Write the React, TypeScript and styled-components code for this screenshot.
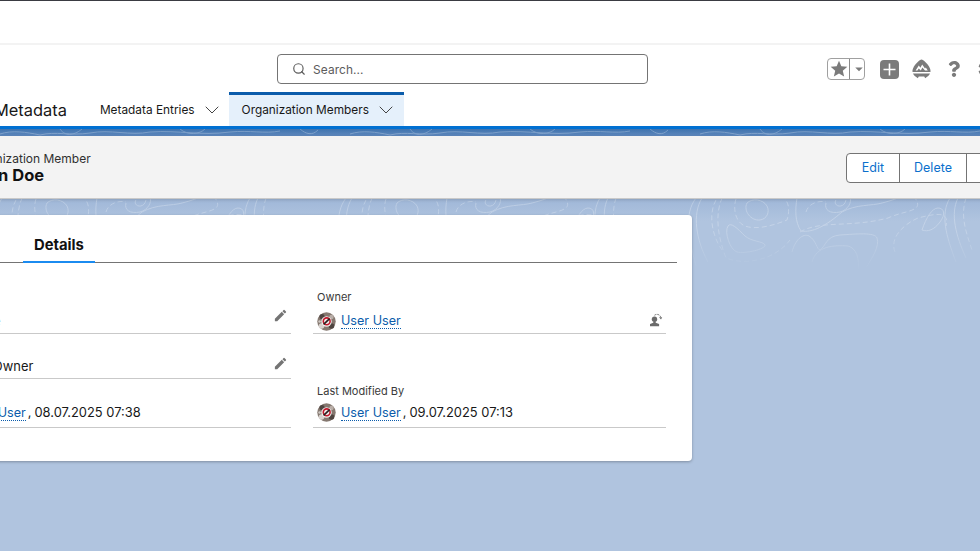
import React from 'react';
import styled, { createGlobalStyle } from 'styled-components';
import { Search as SearchIcon, ChevronDown } from 'lucide-react';
import { MdEdit, MdStar, MdArrowDropDown } from 'react-icons/md';
import { FaCog, FaQuestion } from 'react-icons/fa';

const GlobalStyle = createGlobalStyle`
    html, body {
        margin: 0;
        padding: 0;
        width: 980px;
        height: 551px;
        overflow: hidden;
        background: #b0c4df;
        font-family: Inter, "Liberation Sans", sans-serif;
        color: #181818;
    }
`;

const Shell = styled.div`
    width: 1240px;
    height: 551px;
    margin-left: -100px;
    display: flex;
    flex-direction: column;
`;

const WindowBar = styled.div`
    height: 43px;
    flex: none;
    background: #fff;
    border-top: 1px solid #3a3b42;
    box-sizing: border-box;
`;

const Header = styled.header`
    flex: none;
    background: #fff;
    border-top: 2px solid #f3f3f3;
    position: relative;
    z-index: 2;
`;

const TopRow = styled.div`
    height: 47px;
    display: flex;
    align-items: flex-start;
    padding: 9px 0 0 377px;
    box-sizing: border-box;
`;

const SearchBox = styled.div`
    width: 371px;
    height: 30px;
    box-sizing: border-box;
    border: 1px solid #747474;
    border-radius: 4px;
    display: flex;
    align-items: center;
    gap: 7px;
    padding-left: 14px;
    font-size: 11.9px;
    color: #5c5c5c;
    letter-spacing: 0.1px;
`;

const Actions = styled.div`
    display: flex;
    align-items: center;
    height: 30px;
    margin-left: 179px;
    color: #7b7b7b;
`;

const FavGroup = styled.div`
    width: 38px;
    height: 22px;
    box-sizing: border-box;
    border: 1px solid #a0a0a0;
    border-radius: 4px;
    display: grid;
    grid-template-columns: 21px 1fr;
    align-items: center;
    justify-items: center;
    margin-right: 15px;
`;

const FavCaret = styled.div`
    height: 100%;
    width: 100%;
    border-left: 1px solid #8a8a8a;
    display: flex;
    align-items: center;
    justify-content: center;
`;

const ActionIcon = styled.div<{ $gap: number }>`
    display: flex;
    align-items: center;
    justify-content: center;
    margin-right: ${(p) => p.$gap}px;
`;

const NavRow = styled.nav`
    height: 34px;
    display: flex;
    align-items: stretch;
    padding-left: 94px;
    border-bottom: 3px solid #0070d2;
`;

const AppName = styled.div`
    font-size: 16.4px;
    line-height: 34px;
    margin: 0 21px 0 0;
    padding-top: 1px;
`;

const NavItem = styled.div<{ $active?: boolean }>`
    display: flex;
    align-items: center;
    gap: 5px;
    box-sizing: border-box;
    padding: 0 ${(p) => (p.$active ? '6px' : '5px')} 2px ${(p) => (p.$active ? '13px' : '12px')};
    font-size: 11.85px;
    background: ${(p) => (p.$active ? '#e5f0fb' : 'transparent')};
    border-top: 3px solid ${(p) => (p.$active ? '#0b5cab' : 'transparent')};
    color: #181818;
`;

const Backdrop = styled.main`
    flex: 1;
    position: relative;
    background: linear-gradient(#3f73ae 0, #5e88bd 7px, #9fb7d8 69px, #b0c4df 92px);
    overflow: hidden;
`;

const Contours = styled.svg`
    position: absolute;
    top: 0;
    left: 0;
    width: 1240px;
    height: 141px;
    fill: none;
    stroke: #fff;
    stroke-width: 1;
    opacity: 0.25;
    mask-image: linear-gradient(#000 70%, transparent 100%);
`;

const Content = styled.div`
    position: relative;
`;

const Highlights = styled.section`
    margin: 7px 0 16px;
    height: 63px;
    box-sizing: border-box;
    background: #f3f3f3;
    border-bottom: 1px solid #c9c9c9;
    box-shadow: 0 1px 3px rgba(0, 0, 0, 0.15);
    display: flex;
    align-items: center;
    justify-content: space-between;
    padding: 1px 0 0 68px;
`;

const RecordTitle = styled.div`
    display: flex;
    flex-direction: column;
`;

const RecordType = styled.div`
    font-size: 12px;
    line-height: 15px;
    color: #303030;
`;

const RecordName = styled.div`
    font-size: 16.5px;
    font-weight: 700;
    line-height: 19px;
    color: #111;
`;

const ButtonGroup = styled.div`
    display: flex;
    height: 30px;
    margin-right: 102px;
    background: #fff;
    border: 1px solid #747474;
    border-radius: 4px;
    box-sizing: border-box;
`;

const RecordButton = styled.div<{ $width: number }>`
    width: ${(p) => p.$width}px;
    display: flex;
    align-items: center;
    justify-content: center;
    font-size: 12.5px;
    color: #0b6fcc;
    & + & {
        border-left: 1px solid #747474;
    }
`;

const Card = styled.section`
    margin-left: 12px;
    width: 780px;
    height: 246px;
    box-sizing: border-box;
    background: #fff;
    border-radius: 4px;
    box-shadow: 0 1px 3px rgba(0, 0, 0, 0.28);
    padding: 0 15px;
`;

const Tabs = styled.div`
    height: 48px;
    box-sizing: border-box;
    border-bottom: 1px solid #747474;
    display: flex;
    align-items: flex-end;
`;

const Tab = styled.div<{ $active?: boolean }>`
    height: 47px;
    box-sizing: border-box;
    width: ${(p) => (p.$active ? '72px' : '96px')};
    padding: 13px 0 0 11px;
    line-height: 32px;
    font-size: 14.8px;
    font-weight: ${(p) => (p.$active ? 700 : 400)};
    border-bottom: 2px solid ${(p) => (p.$active ? '#1b8bf0' : 'transparent')};
    margin-bottom: -1px;
    color: #111;
`;

const Fields = styled.div`
    display: grid;
    grid-template-columns: 353px 353px;
    grid-template-rows: 44px 45px 49px;
    column-gap: 22px;
    padding: 27px 0 0 11px;
`;

const Field = styled.div<{ $empty?: boolean }>`
    box-sizing: border-box;
    position: relative;
    padding: 0 4px;
    border-bottom: ${(p) => (p.$empty ? '0' : '1px solid #c9c9c9')};
    display: flex;
    flex-direction: column;
    justify-content: flex-end;
`;

const Label = styled.div`
    font-size: 11px;
    line-height: 14px;
    color: #3a3a3a;
    margin-bottom: 7px;
`;

const Value = styled.div<{ $tall?: boolean }>`
    display: flex;
    align-items: center;
    height: 20px;
    margin-top: ${(p) => (p.$tall ? '-3px' : '0')};
    margin-bottom: ${(p) => (p.$tall ? '5px' : '2px')};
    font-size: 12.9px;
    color: #181818;
`;

const UserLink = styled.span<{ $drop?: boolean }>`
    color: #0b5cab;
    font-size: 12.6px;
    border-bottom: 1px dotted #0b5cab;
    line-height: 14px;
    margin: ${(p) => (p.$drop ? '3px' : '0')} 0 0 5px;
`;

const Comma = styled.span`
    margin: 0 3px 0 2px;
`;

const EditSlot = styled.div<{ $bottom: number }>`
    position: absolute;
    right: 3px;
    bottom: ${(p) => p.$bottom}px;
    display: flex;
    color: #747474;
`;

const Avatar = () => (
    <svg width="19" height="19" viewBox="0 0 19 19">
        <circle cx="9.5" cy="9.5" r="9.2" fill="#857870" />
        <circle cx="5" cy="4.5" r="2.6" fill="#4e4440" />
        <circle cx="14.5" cy="5" r="2.2" fill="#b9aea8" />
        <circle cx="14.5" cy="14" r="2.8" fill="#4e4440" />
        <circle cx="4.5" cy="14" r="2.8" fill="#d8d2ce" />
        <circle cx="2.6" cy="9.5" r="1.3" fill="#cfc8c3" />
        <circle cx="9.5" cy="9.5" r="5.2" fill="#f1eeec" />
        <circle cx="9.7" cy="9.3" r="3.4" fill="none" stroke="#c4182c" strokeWidth="1.6" />
        <path d="M6.6 12.4 12.6 6.6" stroke="#2a1f1f" strokeWidth="1.6" />
    </svg>
);

const PlusSquare = () => (
    <svg width="19" height="19" viewBox="0 0 19 19">
        <rect width="19" height="19" rx="4" fill="#7b7b7b" />
        <path d="M9.5 3.5v12M3.5 9.5h12" stroke="#fff" strokeWidth="1.6" />
    </svg>
);

const TrailIcon = () => (
    <svg width="19" height="20" viewBox="0 0 19 20">
        <path d="M9.5 0.5C11.5 1 15 4 17 7.5C18.4 10 18.8 12 18.4 13H0.6C0.2 12 0.6 10 2 7.5C4 4 7.5 1 9.5 0.5Z" fill="#7b7b7b" />
        <path d="M3.6 11.6 6.8 6.6 8.4 8.8 10.2 5.6 13 9.4 13.8 8.4 15.8 11.6H13L10.4 8.4 8.8 11.6 6.8 9.6 5.4 11.6Z" fill="#fff" />
        <path d="M1 14.6H18C17.4 16.2 15.4 18 13.2 19.2L12.2 17.4H6.8L5.8 19.2C3.6 18 1.6 16.2 1 14.6Z" fill="#7b7b7b" />
    </svg>
);

const ChangeOwnerIcon = () => (
    <svg width="14" height="14" viewBox="0 0 14 14" fill="#6b6b6b">
        <circle cx="5.5" cy="6.2" r="2.7" />
        <path d="M4.3 8.5h2.4v1.2l3.4 1.2v2.4H1v-2.4l3.3-1.2Z" />
        <path d="M5.5 2.2C7.8 0.6 10.6 1.4 11.6 3.8" fill="none" stroke="#6b6b6b" strokeWidth="1" strokeDasharray="2 1" />
        <path d="M10 4.2h3.2L12 6.4Z" />
    </svg>
);

// one tile of the topographic lines behind the top of the page
const ContourTile = () => (
    <g id="tile">
        <path d="M747 203C752 198 763 199 767 206C770 212 767 219 760 220C751 221 743 211 747 203Z" />
        <path d="M736 199C733 208 735 222 745 226C756 230 772 226 787 220C790 210 789 202 783 197" strokeDasharray="5 3" />
        <path d="M728 226C731 222 737 228 745 236C752 242 763 241 765 245C766 249 745 254 737 252C730 250 724 232 728 226Z" />
        <path d="M716 200C708 214 712 236 722 250" strokeDasharray="5 3" />
        <path d="M702 198C692 214 696 240 708 262" />
        <path d="M696 198C684 214 688 236 696 266" />
        <path d="M722 198C716 212 716 232 726 258C745 266 775 260 790 240" strokeDasharray="5 3" />
        <path d="M797 198C795 210 795 222 801 231C812 233 826 226 842 212C856 204 872 206 882 203C902 198 910 192 912 190" />
        <path d="M806 212C808 204 818 200 826 202" strokeDasharray="5 3" />
        <path d="M826 203C824 210 830 214 840 212C848 210 852 202 850 198M836 200C832 206 844 210 846 200" />
        <path d="M792 252C795 240 803 233 809 236C816 240 817 250 820 250C826 246 826 236 840 235C856 234 875 232 877 238C880 246 872 258 866 268" />
        <path d="M812 262C816 246 834 245 848 246C856 248 860 258 858 272" />
        <path d="M800 232C820 220 850 228 888 218C905 210 925 212 915 198" strokeDasharray="5 3" />
        <path d="M895 252C890 240 900 226 918 218C934 214 950 210 946 226" strokeDasharray="5 3" />
        <path d="M922 230C926 218 932 208 938 208C944 208 946 214 940 222C934 230 928 232 922 230Z" />
        <path d="M950 198C940 214 946 236 956 262" />
        <path d="M958 198C950 214 956 236 966 258" />
        <path d="M966 198C960 216 966 232 972 250" strokeDasharray="5 3" />
        <path d="M700 134C712 130 726 132 740 135C756 131 770 136 790 133C810 129 830 136 850 132C880 130 900 136 930 132C950 130 965 134 980 131" />
        <path d="M760 129C766 138 776 134 782 129M880 129C888 136 900 134 905 129M650 129 C656 134 662 136 668 130" />
    </g>
);

const tileOffsets = [-350, -700, -1050];

const App: React.FC = () => {
    return (
        <Shell>
            <GlobalStyle />
            <WindowBar />
            <Header>
                <TopRow>
                    <SearchBox>
                        <SearchIcon size={14} color="#5c5c5c" strokeWidth={2} />
                        Search...
                    </SearchBox>
                    <Actions>
                        <FavGroup>
                            <MdStar size={20} />
                            <FavCaret>
                                <MdArrowDropDown size={18} />
                            </FavCaret>
                        </FavGroup>
                        <ActionIcon $gap={13}><PlusSquare /></ActionIcon>
                        <ActionIcon $gap={15}><TrailIcon /></ActionIcon>
                        <ActionIcon $gap={16}><FaQuestion size={16} /></ActionIcon>
                        <ActionIcon $gap={0}><FaCog size={18} /></ActionIcon>
                    </Actions>
                </TopRow>
                <NavRow>
                    <AppName>Metadata</AppName>
                    <NavItem>
                        Metadata Entries
                        <ChevronDown size={24} strokeWidth={1} color="#444" />
                    </NavItem>
                    <NavItem $active>
                        Organization Members
                        <ChevronDown size={24} strokeWidth={1} color="#444" />
                    </NavItem>
                </NavRow>
            </Header>
            <Backdrop>
                <Contours viewBox="-100 129 1240 141">
                    <ContourTile />
                    {tileOffsets.map((dx) => (
                        <use key={dx} href="#tile" x={dx} />
                    ))}
                </Contours>
                <Content>
                    <Highlights>
                        <RecordTitle>
                            <RecordType>Organization Member</RecordType>
                            <RecordName>John Doe</RecordName>
                        </RecordTitle>
                        <ButtonGroup>
                            <RecordButton $width={52}>Edit</RecordButton>
                            <RecordButton $width={66}>Delete</RecordButton>
                            <RecordButton $width={70}>Clone</RecordButton>
                        </ButtonGroup>
                    </Highlights>
                    <Card>
                        <Tabs>
                            <Tab>Related</Tab>
                            <Tab $active>Details</Tab>
                        </Tabs>
                        <Fields>
                            <Field>
                                <Label>Name</Label>
                                <Value>John Doe</Value>
                                <EditSlot $bottom={10}><MdEdit size={15} /></EditSlot>
                            </Field>
                            <Field>
                                <Label>Owner</Label>
                                <Value>
                                    <Avatar />
                                    <UserLink>User User</UserLink>
                                </Value>
                                <EditSlot $bottom={6}><ChangeOwnerIcon /></EditSlot>
                            </Field>
                            <Field>
                                <Label>Role</Label>
                                <Value>Primary Owner</Value>
                                <EditSlot $bottom={7}><MdEdit size={15} /></EditSlot>
                            </Field>
                            <Field $empty />
                            <Field>
                                <Label>Created By</Label>
                                <Value $tall>
                                    <Avatar />
                                    <UserLink $drop>User User</UserLink>
                                    <Comma>,</Comma>
                                    08.07.2025 07:38
                                </Value>
                            </Field>
                            <Field>
                                <Label>Last Modified By</Label>
                                <Value $tall>
                                    <Avatar />
                                    <UserLink $drop>User User</UserLink>
                                    <Comma>,</Comma>
                                    09.07.2025 07:13
                                </Value>
                            </Field>
                        </Fields>
                    </Card>
                </Content>
            </Backdrop>
        </Shell>
    );
};

export default App;
